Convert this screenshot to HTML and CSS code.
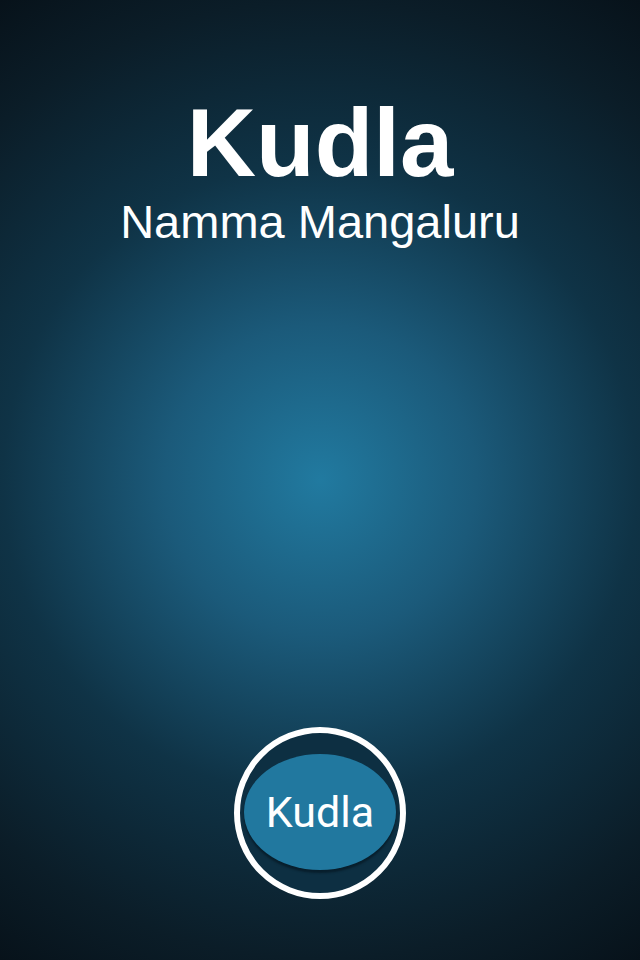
FILE: index.html
```html
<!DOCTYPE html>
<html>
<head>
<meta charset="utf-8">
<link rel="stylesheet" href="styles.css">
</head>
<body>
<main class="screen">
  <header class="hero">
    <h1 class="title">Kudla</h1>
    <p class="subtitle">Namma Mangaluru</p>
  </header>
  <div class="action">
    <button class="ring-btn"><span class="ring-inner">Kudla</span></button>
  </div>
</main>
</body>
</html>
```
FILE: styles.css
```css
html, body {
  margin: 0;
  padding: 0;
  width: 640px;
  height: 960px;
  overflow: hidden;
}
.screen {
  width: 640px;
  height: 960px;
  box-sizing: border-box;
  display: flex;
  flex-direction: column;
  align-items: center;
  justify-content: space-between;
  padding: 93px 0 61px;
  background: radial-gradient(circle farthest-corner at 320px 480px,
    #217aa0 0%, #1b5a7a 27%, #0f3346 55%, #0b1d28 83%, #07121a 100%);
  font-family: "Liberation Sans", Arial, sans-serif;
  color: #fff;
}
.hero {
  text-align: center;
}
.title {
  margin: 0;
  font-size: 96px;
  font-weight: bold;
  line-height: 100px;
}
.subtitle {
  margin: 2px 0 0;
  font-size: 47px;
  line-height: 54px;
}
.action {
  display: flex;
  justify-content: center;
}
.ring-btn {
  width: 172px;
  height: 172px;
  box-sizing: border-box;
  border: 6px solid #fff;
  border-radius: 50%;
  background: #0d2f42;
  padding: 0;
  display: flex;
  align-items: center;
  justify-content: center;
  cursor: pointer;
}
.ring-inner {
  width: 152px;
  height: 116px;
  border-radius: 50%;
  background: #21789f;
  box-shadow: 0 3px 2px rgba(5, 20, 30, 0.6);
  display: flex;
  align-items: center;
  justify-content: center;
  margin-top: -3px;
  font-family: Roboto, "Liberation Sans", sans-serif;
  font-size: 43px;
  color: #fff;
}
```
